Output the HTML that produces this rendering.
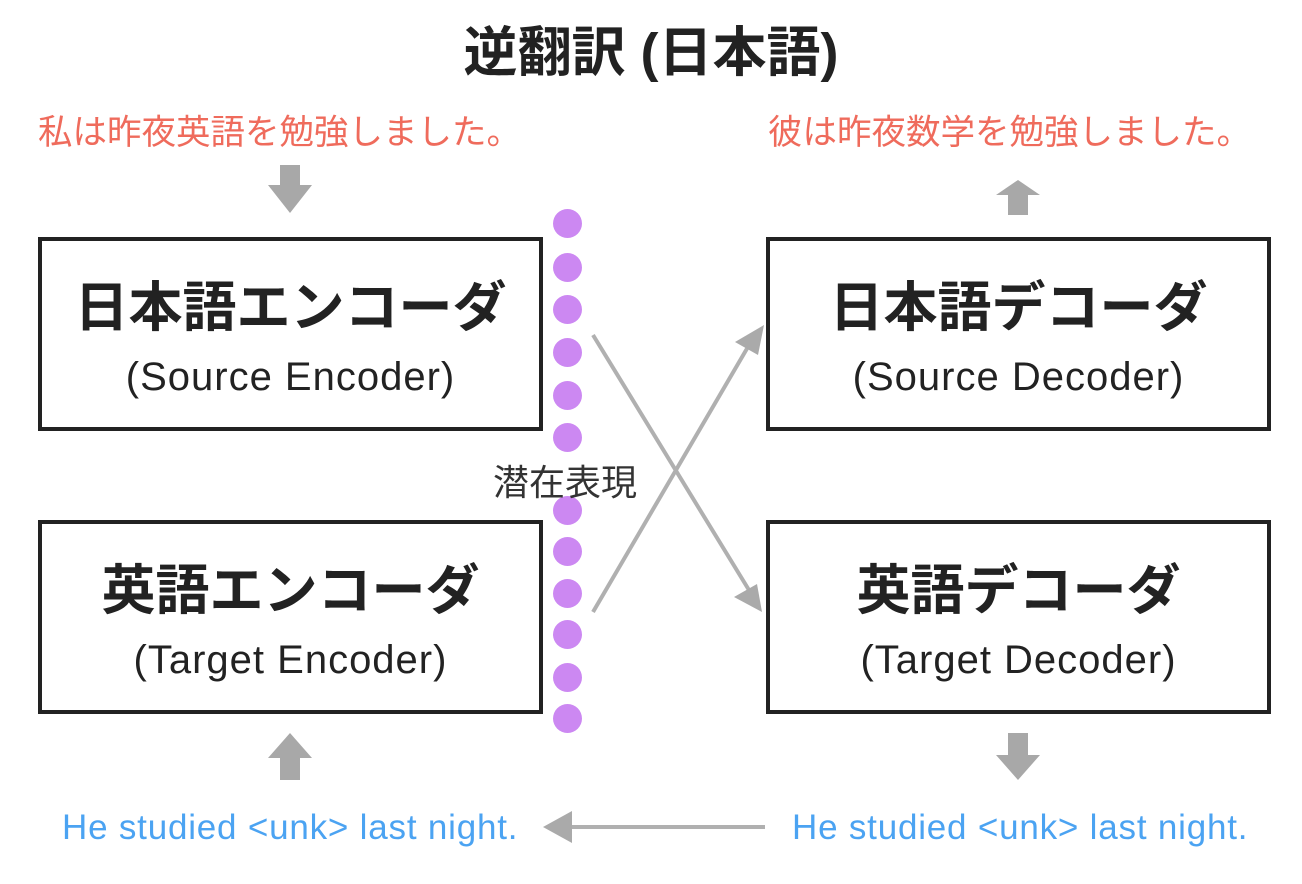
<!DOCTYPE html>
<html><head><meta charset="utf-8"><style>
body{margin:0;width:1302px;height:884px;background:#fff;position:relative;overflow:hidden;font-family:"Liberation Sans","Noto Sans CJK JP",sans-serif}
.t{position:absolute;white-space:nowrap}
.box{position:absolute;width:497px;height:186px;border:4px solid #222;box-sizing:content-box}
.jp{position:absolute;left:0;right:0;text-align:center;font-size:54px;font-weight:bold;color:#222;top:22px}
.en{position:absolute;left:0;right:0;text-align:center;font-size:40px;letter-spacing:1px;color:#222;top:114px}
.dot{position:absolute;left:553px;width:29px;height:29px;border-radius:50%;background:#cc88f2}
</style></head><body>
<div class="t" style="left:0;width:1302px;text-align:center;top:8px;font-size:54px;font-weight:bold;color:#222">逆翻訳 (日本語)</div>
<div class="t" style="left:38px;top:104px;font-size:34.5px;color:#ef6b5c">私は昨夜英語を勉強しました。</div>
<div class="t" style="left:768px;top:104px;font-size:34.5px;color:#ef6b5c">彼は昨夜数学を勉強しました。</div>
<div class="box" style="left:38px;top:237px"><div class="jp">日本語エンコーダ</div><div class="en">(Source Encoder)</div></div>
<div class="box" style="left:38px;top:520px"><div class="jp">英語エンコーダ</div><div class="en">(Target Encoder)</div></div>
<div class="box" style="left:766px;top:237px"><div class="jp">日本語デコーダ</div><div class="en">(Source Decoder)</div></div>
<div class="box" style="left:766px;top:520px"><div class="jp">英語デコーダ</div><div class="en">(Target Decoder)</div></div>
<div class="dot" style="top:209px"></div><div class="dot" style="top:253px"></div><div class="dot" style="top:295px"></div><div class="dot" style="top:338px"></div><div class="dot" style="top:381px"></div><div class="dot" style="top:423px"></div>
<div class="dot" style="top:496px"></div><div class="dot" style="top:537px"></div><div class="dot" style="top:579px"></div><div class="dot" style="top:620px"></div><div class="dot" style="top:663px"></div><div class="dot" style="top:704px"></div>
<div class="t" style="left:493px;top:454px;font-size:36px;color:#333">潜在表現</div>
<div class="t" style="left:62px;top:808px;font-size:35px;letter-spacing:0.8px;color:#4ba3f2">He studied &lt;unk&gt; last night.</div>
<div class="t" style="left:792px;top:808px;font-size:35px;letter-spacing:0.8px;color:#4ba3f2">He studied &lt;unk&gt; last night.</div>
<svg width="1302" height="884" style="position:absolute;left:0;top:0">
<g fill="#a8a8a8">
<polygon points="280,165 300,165 300,185 312,185 290,213 268,185 280,185"/>
<polygon points="1008,215 1028,215 1028,195 1040,195 1018,180 996,195 1008,195"/>
<polygon points="280,780 300,780 300,758 312,758 290,733 268,758 280,758"/>
<polygon points="1008,733 1028,733 1028,755 1040,755 1018,780 996,755 1008,755"/>
</g>
<g stroke="#b0b0b0" stroke-width="4" fill="#b0b0b0">
<line x1="593" y1="335" x2="752" y2="595"/>
<line x1="593" y1="612" x2="752" y2="340"/>
<line x1="568" y1="827" x2="765" y2="827"/>
</g>
<g fill="#aaa">
<polygon points="762,612 734,597 757,584"/>
<polygon points="764,325 758,355 735,342"/>
<polygon points="543,827 572,811 572,843"/>
</g>
</svg>
</body></html>
